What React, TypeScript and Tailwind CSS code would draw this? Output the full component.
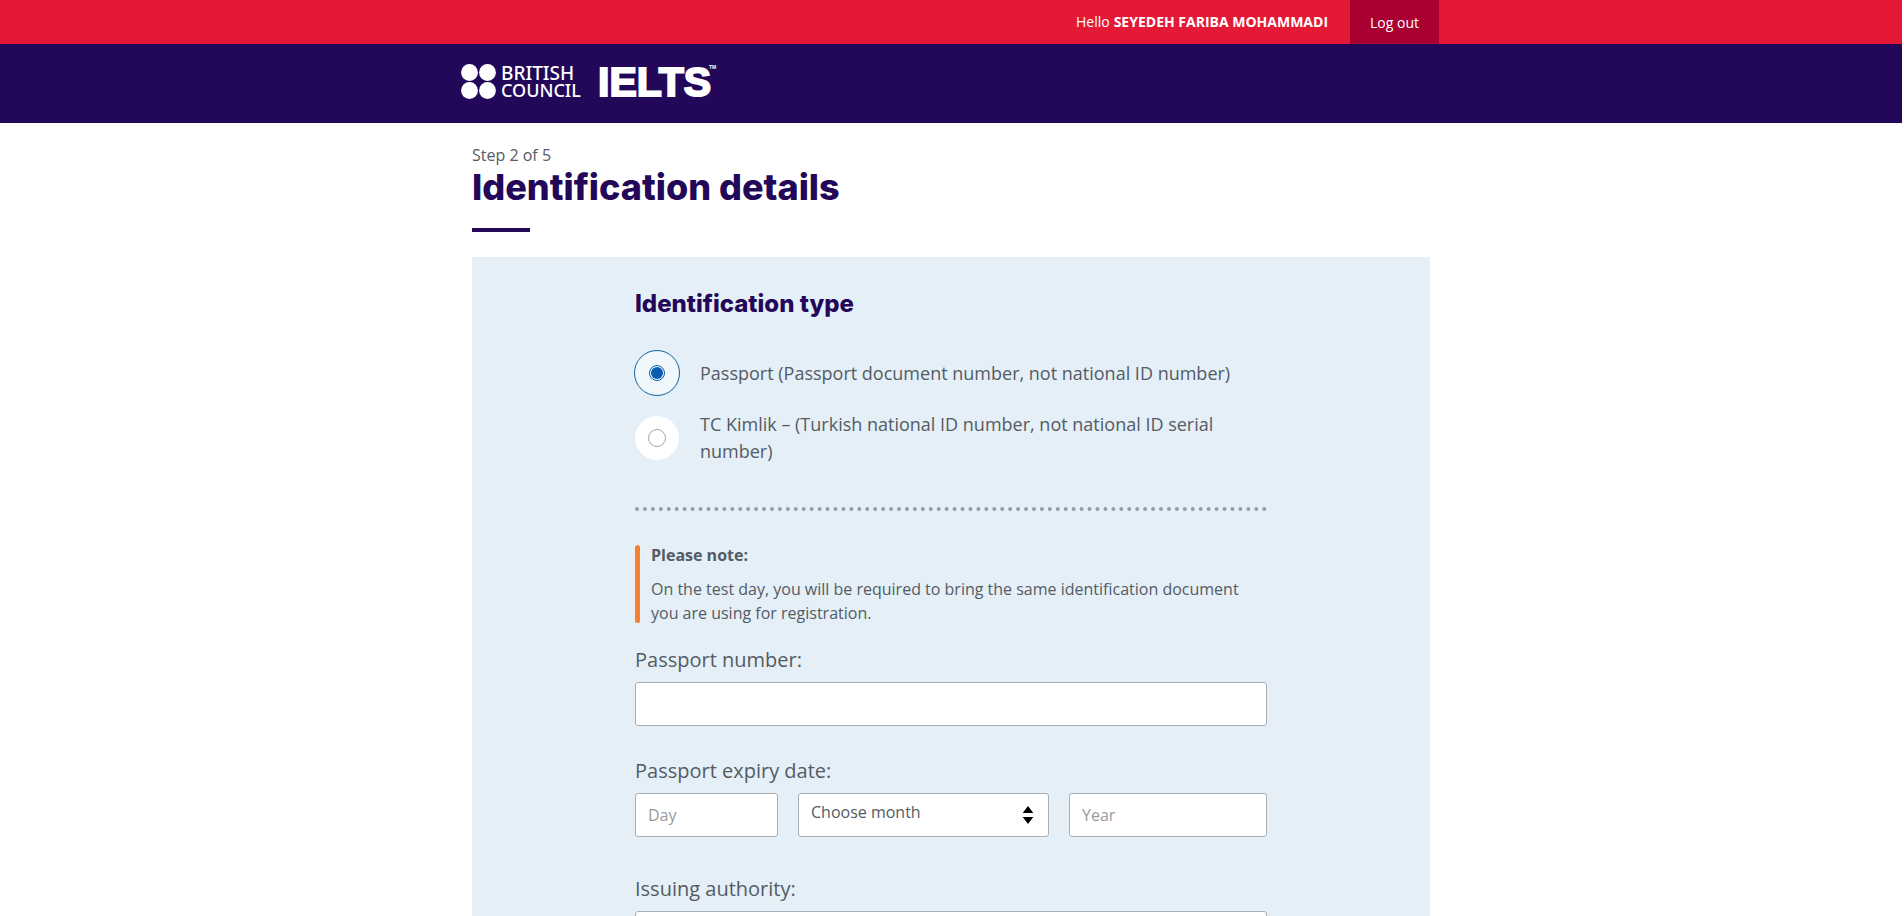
import {useState} from 'react';

const inputClass =
    'h-11 w-full rounded-[3px] border border-[#a9aeb5] bg-white px-3 text-base text-[#545b64] placeholder:text-[#9a9a9a]';

const months = [
    'January', 'February', 'March', 'April', 'May', 'June',
    'July', 'August', 'September', 'October', 'November', 'December',
];

const idTypes = [
    {id: 'passport', label: 'Passport (Passport document number, not national ID number)'},
    {id: 'tc-kimlik', label: 'TC Kimlik – (Turkish national ID number, not national ID serial number)'},
];

function Logo() {
    return (
        <svg className="overflow-visible" width="256" height="40" viewBox="0 0 256 40" fill="#fff" aria-hidden="true">
            <circle cx="8.5" cy="10.5" r="8.4" />
            <circle cx="26.5" cy="10.5" r="8.4" />
            <circle cx="8.5" cy="28.5" r="8.4" />
            <circle cx="26.5" cy="28.5" r="8.4" />
            <text x="40" y="18" fontFamily="'Noto Sans', sans-serif" fontSize="19" fontWeight="500">BRITISH</text>
            <text x="40" y="35" fontFamily="'Noto Sans', sans-serif" fontSize="18" fontWeight="500">COUNCIL</text>
            <text
                x="137"
                y="34"
                fontFamily="'Liberation Sans', sans-serif"
                fontSize="41"
                fontWeight="700"
                stroke="#fff"
                strokeWidth="2"
            >
                IELTS
            </text>
            <text x="248" y="7" fontFamily="'Liberation Sans', sans-serif" fontSize="5" fontWeight="700">TM</text>
        </svg>
    );
}

function Header() {
    return (
        <header className="text-white">
            <div className="bg-[#e31935]">
                <div className="mx-auto flex h-11 max-w-[976px] items-stretch justify-end text-sm">
                    <p className="flex items-center gap-1 pr-[22px]">
                        Hello <strong className="font-bold">SEYEDEH FARIBA MOHAMMADI</strong>
                    </p>
                    <button type="button" className="bg-[#a90031] px-5 pt-0.5">Log out</button>
                </div>
            </div>
            <div className="bg-[#230859]">
                <div className="mx-auto flex h-[79px] max-w-[980px] items-start pt-[18px]">
                    <a href="#" aria-label="British Council IELTS">
                        <Logo />
                    </a>
                </div>
            </div>
        </header>
    );
}

export default function App() {
    const [idType, setIdType] = useState('passport');

    return (
        <div className="bg-white pr-0.5 font-['Open_Sans',sans-serif] text-[#545b64]">
            <Header />

            <main className="mx-auto max-w-[958px] pt-5">
                <p className="text-base leading-6">Step 2 of 5</p>
                <h1 className="font-['Inter',sans-serif] text-4xl leading-10 font-extrabold text-[#230859]">
                    Identification details
                </h1>
                <div className="mt-[21px] h-1 w-[58px] bg-[#230859]" />

                <form className="mt-[25px] bg-[#e4eff7] px-[163px] pt-[31px] pb-10">
                    <fieldset>
                        <legend className="font-['Inter',sans-serif] text-2xl leading-8 font-extrabold text-[#230859]">
                            Identification type
                        </legend>
                        <div className="mt-[30px] -ml-px flex flex-col gap-[15px]">
                            {idTypes.map((type) => (
                                <div key={type.id} className="flex items-center gap-5">
                                    <input
                                        type="radio"
                                        name="idType"
                                        id={type.id}
                                        checked={idType === type.id}
                                        onChange={() => setIdType(type.id)}
                                        className="flex size-[46px] shrink-0 appearance-none items-center justify-center rounded-full border border-transparent bg-white bg-clip-padding before:size-[18px] before:rounded-full before:border before:border-[#a8a8a8] checked:border-[#1464a0] checked:bg-[#f1f8fc] checked:before:size-4 checked:before:border-[#0a5cb0] checked:before:bg-[#0a5cb0] checked:before:bg-clip-content checked:before:p-px"
                                    />
                                    <label htmlFor={type.id} className="text-lg leading-[27px]">{type.label}</label>
                                </div>
                            ))}
                        </div>
                    </fieldset>

                    <hr className="mt-[42px] border-t-4 border-dotted border-[#919ca8]" />

                    <div className="mt-8 flex gap-[11px]">
                        <div className="my-0.5 w-[5px] shrink-0 rounded-sm bg-[#f57f32]" />
                        <div className="flex flex-col gap-2.5 text-base leading-6">
                            <strong className="font-bold">Please note:</strong>
                            <p>
                                On the test day, you will be required to bring the same identification document you
                                are using for registration.
                            </p>
                        </div>
                    </div>

                    <div className="mt-[21px] flex flex-col gap-2">
                        <label htmlFor="passportNumber" className="text-xl leading-7">Passport number:</label>
                        <input id="passportNumber" type="text" className={inputClass} />
                    </div>

                    <fieldset className="mt-[31px]">
                        <legend className="text-xl leading-7">Passport expiry date:</legend>
                        <div className="mt-2 grid grid-cols-[143fr_251fr_198fr] gap-5">
                            <input type="text" aria-label="Day" placeholder="Day" className={inputClass} />
                            <div className="relative">
                                <select
                                    aria-label="Month"
                                    defaultValue=""
                                    className="h-11 w-full appearance-none rounded-[3px] border border-[#a9aeb5] bg-white px-3 pb-1.5 text-base text-[#545b64]"
                                >
                                    <option value="">Choose month</option>
                                    {months.map((month) => (
                                        <option key={month} value={month}>{month}</option>
                                    ))}
                                </select>
                                <svg
                                    className="pointer-events-none absolute top-[13px] right-[15px]"
                                    width="12"
                                    height="18"
                                    viewBox="0 0 12 18"
                                    aria-hidden="true"
                                >
                                    <path d="M6 0 11.3 7H.7zM6 18 .7 11h10.6z" />
                                </svg>
                            </div>
                            <input type="text" aria-label="Year" placeholder="Year" className={inputClass} />
                        </div>
                    </fieldset>

                    <div className="mt-[38px] flex flex-col gap-2">
                        <label htmlFor="issuingAuthority" className="text-xl leading-7">Issuing authority:</label>
                        <input id="issuingAuthority" type="text" className={inputClass} />
                    </div>
                </form>
            </main>
        </div>
    );
}
